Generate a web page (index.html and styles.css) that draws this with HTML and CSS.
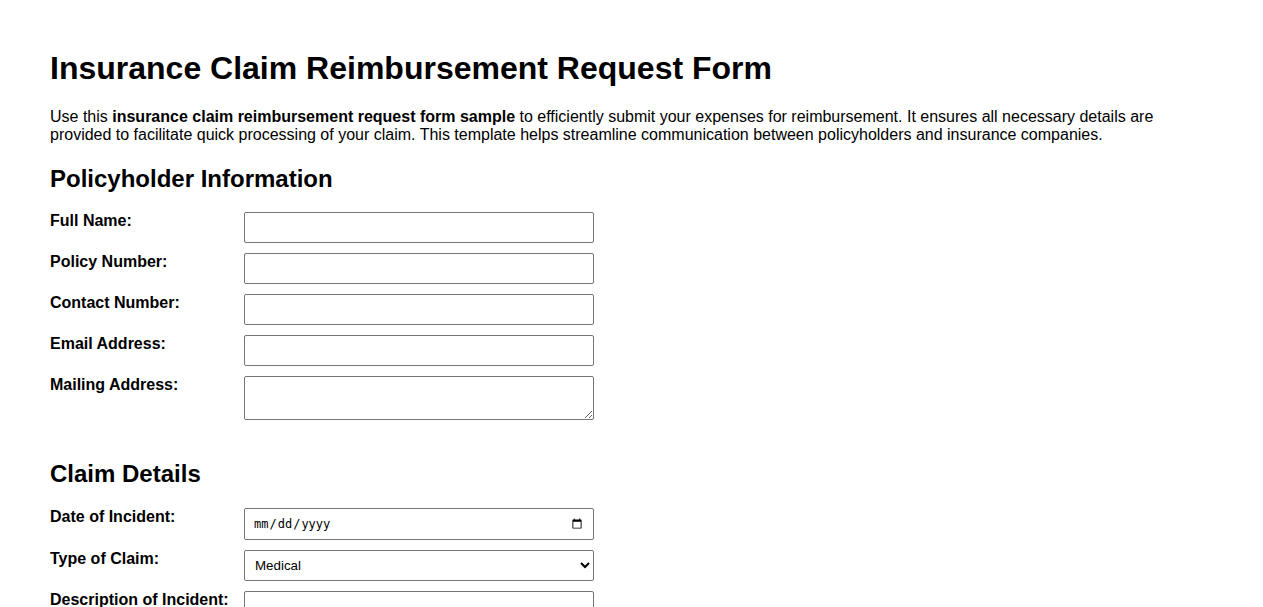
FILE: index.html
```html
<!DOCTYPE html>
<html>
  <head>
    <link rel="stylesheet" href="styles.css">
  </head>
  <body>
    <div class="container">
      <h1>Insurance Claim Reimbursement Request Form</h1>
      <p class="intro">Use this <strong>insurance claim reimbursement request form sample</strong> to efficiently submit your expenses for reimbursement. It ensures all necessary details are provided to facilitate quick processing of your claim. This template helps streamline communication between policyholders and insurance companies.</p>

      <form>
        <div class="section">
          <h2>Policyholder Information</h2>
          <div class="form-row">
            <label for="full-name">Full Name:</label>
            <input type="text" id="full-name" class="field">
          </div>
          <div class="form-row">
            <label for="policy-number">Policy Number:</label>
            <input type="text" id="policy-number" class="field">
          </div>
          <div class="form-row">
            <label for="contact-number">Contact Number:</label>
            <input type="tel" id="contact-number" class="field">
          </div>
          <div class="form-row">
            <label for="email">Email Address:</label>
            <input type="email" id="email" class="field">
          </div>
          <div class="form-row">
            <label for="mailing-address">Mailing Address:</label>
            <textarea id="mailing-address" class="field area"></textarea>
          </div>
        </div>

        <div class="section claim">
          <h2>Claim Details</h2>
          <div class="form-row">
            <label for="incident-date">Date of Incident:</label>
            <input type="date" id="incident-date" class="field date">
          </div>
          <div class="form-row">
            <label for="claim-type">Type of Claim:</label>
            <select id="claim-type" class="field select">
              <option>Medical</option>
              <option>Property</option>
              <option>Auto</option>
              <option>Travel</option>
            </select>
          </div>
          <div class="form-row">
            <label for="description">Description of Incident:</label>
            <textarea id="description" class="field area"></textarea>
          </div>
          <div class="form-row">
            <label for="amount">Amount Claimed:</label>
            <input type="text" id="amount" class="field">
          </div>
        </div>
      </form>
    </div>
  </body>
</html>
```

FILE: styles.css
```css
body {
    margin: 0;
    font-family: Arial, "Liberation Sans", sans-serif;
    color: #000;
}
.container {
    padding: 30px 50px;
}
h1 {
    font-size: 32px;
    margin: 20px 0 21px 0;
}
.intro {
    font-size: 16px;
    margin: 0;
}
h2 {
    font-size: 24px;
    margin: 21px 0 19px 0;
}
.section {
    margin-bottom: 40px;
}
.claim h2 {
    margin-bottom: 20px; /* one px more than the first section */
}
.form-row {
    display: flex;
    align-items: flex-start;
    margin-bottom: 10px;
}
.form-row label {
    width: 194px;
    flex-shrink: 0;
    font-weight: bold;
    font-size: 16px;
}
.field {
    box-sizing: border-box;
    width: 350px;
    height: 31px;
    padding: 6px 8px;
    border: 1px solid #767676;
    border-radius: 2px;
    margin: 0;
}
.area {
    height: 44px;
    display: block;
}
.date {
    height: 32px;
    font-size: 12px;
}
.select {
    padding: 6px 6px;
    background: #fff;
}
```
